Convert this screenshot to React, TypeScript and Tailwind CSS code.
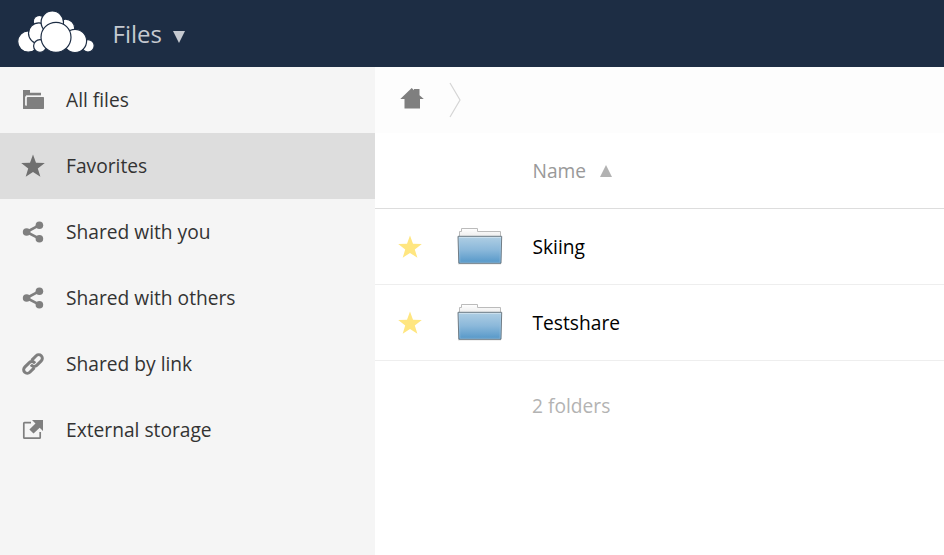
import React from "react";

function Logo() {
  return (
    <svg className="block h-[67px] w-[112.500px] shrink-0" viewBox="0 0 112.5 67" fill="#fff" stroke="#1d2d44" strokeWidth="1.2">
      <circle cx="39.3" cy="21.4" r="6" />
      <circle cx="65.5" cy="28.3" r="9.2" />
      <circle cx="28.3" cy="41.6" r="10.6" />
      <circle cx="38.9" cy="33.2" r="10.4" />
      <circle cx="52.3" cy="22.2" r="11.2" />
      <circle cx="88" cy="45.8" r="6.2" />
      <circle cx="75" cy="40.9" r="11.6" />
      <circle cx="40" cy="46" r="6.4" />
      <circle cx="56" cy="37.3" r="15" />
    </svg>
  );
}

function FolderIcon() {
  return (
    <svg className="block size-6" viewBox="0 0 24 24" fill="#7f7f7f">
      <path d="M2 2h7v2.800h11v2.700H5V21H2.600Q2 21 2 20.400z" />
      <path d="M6.800 9h15.500Q23 9 23 9.700V20.300Q23 21 22.300 21H3V18H4.800Q5.800 18 5.800 17V10Q5.800 9 6.800 9z" />
      <path d="M4.600 17.500V8.800Q4.600 8.200 5.200 8.200H20" fill="none" stroke="#f5f5f5" strokeWidth="1" />
    </svg>
  );
}

function StarIcon({ className }: { className: string }) {
  return (
    <svg className={className} viewBox="0 0 24 24" fill="currentColor">
      <path d="M12 .5l3 8.200 8.800.3-7 5.400 2.600 8.400L12 17.900l-7.300 4.900 2.500-8.400-7-5.400 8.800-.3z" />
    </svg>
  );
}

function ShareIcon() {
  return (
    <svg className="block size-6" viewBox="0 0 24 24" fill="#7f7f7f" stroke="#7f7f7f">
      <path d="M18.400 5.200L5.500 12l12.900 6.700" fill="none" strokeWidth="2.600" />
      <circle cx="18.400" cy="5.200" r="3.800" stroke="none" />
      <circle cx="5.600" cy="12" r="3.800" stroke="none" />
      <circle cx="18.400" cy="18.700" r="3.800" stroke="none" />
    </svg>
  );
}

function LinkIcon() {
  return (
    <svg className="block size-6" viewBox="0 0 24 24" fill="none" stroke="#7f7f7f" strokeWidth="3">
      <g transform="rotate(-45 12 12)">
        <path d="M10.400 15.600H3.900a3.600 3.600 0 0 1 0-7.200h6.500a3.600 3.600 0 0 1 3.600 3.600v1" />
        <path d="M13.600 8.400h6.500a3.600 3.600 0 0 1 0 7.200h-6.500a3.600 3.600 0 0 1-3.600-3.600v-1" />
      </g>
    </svg>
  );
}

function ExternalIcon() {
  return (
    <svg className="block size-6" viewBox="0 0 24 24" fill="none">
      <path d="M10 4.600H3.500Q2.800 4.600 2.800 5.300V19.500Q2.800 20.200 3.500 20.200H18.500Q19.200 20.200 19.200 19.500V14" stroke="#7f7f7f" strokeWidth="1.700" />
      <path d="M11 2h11v11l-3.300-3.300-6.200 5.800-4.100-4L14.500 5.600z" fill="#7f7f7f" />
    </svg>
  );
}

const GreyStar = () => <StarIcon className="block size-6 text-[#6f6f6f]" />;

const navigation = [
  { label: "All files", Icon: FolderIcon },
  { label: "Favorites", Icon: GreyStar, active: true },
  { label: "Shared with you", Icon: ShareIcon },
  { label: "Shared with others", Icon: ShareIcon },
  { label: "Shared by link", Icon: LinkIcon },
  { label: "External storage", Icon: ExternalIcon },
];

function FolderThumb() {
  return (
    <svg className="ml-[33px] block h-12 w-12 shrink-0" viewBox="0 0 48 48">
      <defs>
        <linearGradient id="folder-front" x1="0" y1="0" x2="0" y2="1">
          <stop offset="0" stopColor="#b0cfe4" />
          <stop offset="0.500" stopColor="#8bb8da" />
          <stop offset="1" stopColor="#5497c8" />
        </linearGradient>
        <linearGradient id="folder-back" x1="0" y1="0" x2="0" y2="1">
          <stop offset="0" stopColor="#fff" />
          <stop offset="1" stopColor="#eee" />
        </linearGradient>
      </defs>
      <path d="M4.500 13V8.500H6.500V5.500H22.500V8.500H45.500V13" fill="url(#folder-back)" stroke="#bbb" />
      <path d="M3 41H46" stroke="#000" strokeOpacity="0.12" strokeWidth="1" />
      <path d="M3 13.300H46.700L46 40.300H3.800z" fill="url(#folder-front)" stroke="#707c85" />
      <path d="M4 14.500H46" stroke="#d1e3ef" strokeOpacity="0.8" />
      <path d="M4.300 15L4.900 39.300H45L45.600 15" fill="none" stroke="#b7d6ed" strokeOpacity="0.3" />
    </svg>
  );
}

function FileRow({ name }: { name: string }) {
  return (
    <div className="flex h-[76px] items-center border-b border-[#eee] pl-[23px]">
      <StarIcon className="block size-6 shrink-0 text-[#ffe680]" />
      <FolderThumb />
      <span className="ml-[29.500px] text-black">{name}</span>
    </div>
  );
}

export default function App() {
  return (
    <div className="flex h-[555px] w-[944px] flex-col overflow-hidden bg-white font-['Open_Sans',sans-serif] text-[19.200px] leading-6 text-[#333]">
      <header className="flex h-[67px] shrink-0 items-center bg-[#1d2d44]">
        <Logo />
        <span className="text-2xl text-[#c5c9d0]">Files</span>
        <svg className="ml-[11.500px] mt-1.5 block h-3 w-3" viewBox="0 0 12 12">
          <path d="M0 0h12L6 12z" fill="#c5c9d0" />
        </svg>
      </header>
      <div className="flex min-h-0 flex-1">
        <nav className="w-[375px] shrink-0 bg-[#f5f5f5]">
          {navigation.map(({ label, Icon, active }) => (
            <div key={label} className={`flex h-[66px] items-center pl-[21px] ${active ? "bg-[#ddd]" : ""}`}>
              <Icon />
              <span className="ml-[21px]">{label}</span>
            </div>
          ))}
        </nav>
        <main className="flex-1">
          <div className="flex h-[66px] items-center bg-[#fdfdfd] pl-[25px]">
            <svg className="block size-6" viewBox="0 0 24 24" fill="#7f7f7f">
              <path d="M.3 11L11.700 0l2.300 2.200V1h5.500v6.200l4.300 3.800H20V20.500H4.500V11z" />
            </svg>
            <svg className="ml-[25px] block h-9 w-3" viewBox="0 0 12 36" fill="none">
              <path d="M1 1l10 17L1 35" stroke="#d5d5d5" strokeWidth="1.200" />
            </svg>
          </div>
          <div className="flex h-[76px] items-center border-b border-[#ddd] pl-[157.500px] text-[#999]">
            <span>Name</span>
            <svg className="ml-3.5 block h-3 w-3" viewBox="0 0 12 12">
              <path d="M0 12h12L6 0z" fill="#b2b2b2" />
            </svg>
          </div>
          <FileRow name="Skiing" />
          <FileRow name="Testshare" />
          <div className="pl-[157px] pt-[33px] text-[#b3b3b3]">2 folders</div>
        </main>
      </div>
    </div>
  );
}
